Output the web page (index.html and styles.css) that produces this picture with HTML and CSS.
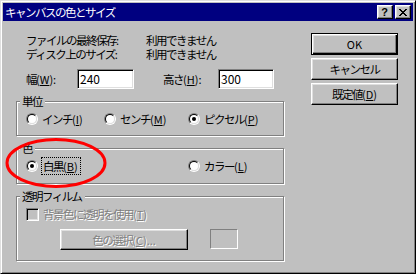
FILE: index.html
```html
<!DOCTYPE html>
<html lang="ja">
<head>
<meta charset="utf-8">
<title>キャンバスの色とサイズ</title>
<link rel="stylesheet" href="styles.css">
</head>
<body>
<div class="window">
  <div class="titlebar">
    <span class="title">キャンバスの色とサイズ</span>
    <div class="caption-buttons">
      <span class="cap-btn help">?</span>
      <span class="cap-btn close">
        <svg width="8" height="7" viewBox="0 0 8 7" shape-rendering="crispEdges"><path d="M0 0h2v1H0zM6 0h2v1H6zM1 1h2v1H1zM5 1h2v1H5zM2 2h4v1H2zM3 3h2v1H3zM2 4h4v1H2zM1 5h2v1H1zM5 5h2v1H5zM0 6h2v1H0zM6 6h2v1H6z" fill="#000"/></svg>
      </span>
    </div>
  </div>
  <div class="content">
    <div class="main">
      <div class="info">
        <span>ファイルの最終保存<span class="lat">:</span></span><span>利用できません</span>
        <span>ディスク上のサイズ<span class="lat">:</span></span><span>利用できません</span>
      </div>
      <div class="size-row">
        <span class="size-label w">幅<span class="lat">(<u>W</u>):</span></span>
        <span class="edit w">240</span>
        <span class="size-label h">高さ<span class="lat">(<u>H</u>):</span></span>
        <span class="edit h">300</span>
      </div>
      <div class="group units">
        <span class="legend">単位</span>
        <div class="options three">
          <span class="opt"><span class="radio"></span><span>インチ<span class="lat">(<u>I</u>)</span></span></span>
          <span class="opt"><span class="radio"></span><span>センチ<span class="lat">(<u>M</u>)</span></span></span>
          <span class="opt"><span class="radio checked"></span><span>ピクセル<span class="lat">(<u>P</u>)</span></span></span>
        </div>
      </div>
      <div class="group colors">
        <span class="legend">色</span>
        <div class="options two">
          <span class="opt"><span class="radio checked"></span><span class="focus">白黒<span class="lat">(<u>B</u>)</span></span></span>
          <span class="opt"><span class="radio"></span><span>カラー<span class="lat">(<u>L</u>)</span></span></span>
        </div>
      </div>
      <div class="group trans">
        <span class="legend">透明フィルム</span>
        <div class="check-row">
          <span class="checkbox"></span>
          <span class="disabled">背景色に透明を使用<span class="lat">(<u>T</u>)</span></span>
        </div>
        <div class="pick-row">
          <span class="btn pick"><span class="disabled">色の選択<span class="lat">(<u>C</u>)...</span></span></span>
          <span class="swatch"></span>
        </div>
      </div>
    </div>
    <div class="buttons">
      <span class="btn default"><span class="lat">OK</span></span>
      <span class="btn">キャンセル</span>
      <span class="btn">既定値<span class="lat">(<u>D</u>)</span></span>
    </div>
  </div>
</div>
<svg class="annotation" width="416" height="274" viewBox="0 0 416 274">
  <ellipse cx="56" cy="163" rx="49" ry="23.5" fill="none" stroke="#ff0000" stroke-width="3"/>
</svg>
</body>
</html>
```
FILE: styles.css
```css
* { box-sizing: border-box; }

html, body {
  margin: 0;
  padding: 0;
}

body {
  position: relative;
  width: 416px;
  height: 274px;
  background: #c0c0c0;
  font-family: "Noto Sans CJK JP", sans-serif;
  font-size: 11.5px;
  line-height: 14px;
  letter-spacing: -1.5px;
  color: #000;
  overflow: hidden;
}

.lat {
  letter-spacing: 0;
  font-size: 11px;
}

u { text-decoration: underline; text-underline-offset: 1px; }

.window {
  width: 416px;
  height: 274px;
  background: #c0c0c0;
  border: 1px solid;
  border-color: #dfdfdf #000 #000 #dfdfdf;
  box-shadow: inset 1px 1px #fff, inset -1px -1px #808080;
  padding: 2px;
  display: flex;
  flex-direction: column;
}

.titlebar {
  height: 18px;
  flex: none;
  background: #000080;
  color: #fff;
  display: flex;
  align-items: center;
  justify-content: space-between;
  padding: 0 2px;
}

.title { line-height: 18px; font-size: 11.5px; }

.caption-buttons {
  display: flex;
  gap: 2px;
}

.cap-btn {
  width: 16px;
  height: 14px;
  background: #c0c0c0;
  border: 1px solid;
  border-color: #fff #000 #000 #fff;
  box-shadow: inset -1px -1px #808080, inset 1px 1px #dfdfdf;
  display: flex;
  align-items: center;
  justify-content: center;
  color: #000;
}

.cap-btn.help {
  font-family: "Liberation Sans", sans-serif;
  font-weight: bold;
  font-size: 11px;
  letter-spacing: 0;
  line-height: 12px;
  padding-right: 1px;
}

.cap-btn.close svg { display: block; }

.content {
  flex: 1;
  display: flex;
  padding: 12px 0 0 13px;
}

.main {
  width: 268px;
  flex: none;
}

.info {
  display: grid;
  grid-template-columns: 120px auto;
  padding-left: 10px;
}

.size-row {
  display: flex;
  align-items: center;
  height: 20px;
  margin-top: 8px;
  padding-left: 10px;
}

.size-label.w { width: 51px; }
.size-label.h { width: 55px; margin-left: 29px; }

.edit {
  height: 20px;
  background: #fff;
  border: 1px solid;
  border-color: #808080 #fff #fff #808080;
  box-shadow: inset 1px 1px #000, inset -1px -1px #dfdfdf;
  font-size: 12px;
  letter-spacing: 0;
  line-height: 18px;
  padding-left: 2px;
}
.edit.w { width: 57px; }
.edit.h { width: 56px; }

.group {
  position: relative;
  border: 1px solid #808080;
  box-shadow: inset 1px 1px #fff, 1px 1px #fff;
  margin-top: 12px;
}
.group.units { height: 35px; }
.group.colors { height: 36px; }
.group.trans { height: 65px; }

.legend {
  position: absolute;
  top: -8px;
  left: 3px;
  padding: 0 3px 0 2px;
  background: #c0c0c0;
  line-height: 14px;
}

.options {
  display: grid;
  padding-left: 9px;
}
.options.three { grid-template-columns: 78px 84px auto; padding-top: 9px; }
.options.two { grid-template-columns: 162px auto; padding-top: 9px; }

.opt {
  display: flex;
  align-items: center;
  gap: 4px;
  height: 16px;
}

.radio {
  position: relative;
  width: 12px;
  height: 12px;
  flex: none;
  border-radius: 50%;
  border: 1px solid;
  border-color: #808080 #fff #fff #808080;
}
.radio::before {
  content: "";
  position: absolute;
  left: 0;
  top: 0;
  width: 10px;
  height: 10px;
  box-sizing: border-box;
  border-radius: 50%;
  border: 1px solid;
  border-color: #000 #dfdfdf #dfdfdf #000;
  background: #fff;
}
.radio.checked::after {
  content: "";
  position: absolute;
  left: 3px;
  top: 3px;
  width: 4px;
  height: 4px;
  border-radius: 50%;
  background: #000;
}

.focus {
  outline: 1px dotted #000;
  outline-offset: 0;
  padding: 1px 2px 1px 1px;
  line-height: 14px;
}

.check-row {
  display: flex;
  align-items: center;
  gap: 4px;
  height: 14px;
  margin: 10px 0 0 9px;
}

.checkbox {
  width: 13px;
  height: 13px;
  flex: none;
  border: 1px solid;
  border-color: #808080 #fff #fff #808080;
  box-shadow: inset 1px 1px #000, inset -1px -1px #dfdfdf;
  background: #c0c0c0;
}

.disabled {
  color: #808080;
  text-shadow: 1px 1px 0 #fff;
}

.pick-row {
  display: flex;
  align-items: flex-start;
  margin: 8px 0 0 43px;
}

.btn {
  width: 87px;
  height: 22px;
  background: #c0c0c0;
  border: 1px solid;
  border-color: #fff #000 #000 #fff;
  box-shadow: inset -1px -1px #808080, inset 1px 1px #dfdfdf;
  display: flex;
  align-items: center;
  justify-content: center;
}

.btn.pick {
  width: 128px;
  height: 21px;
}

.swatch {
  width: 28px;
  height: 20px;
  margin-left: 22px;
  border: 1px solid;
  border-color: #808080 #fff #fff #808080;
}

.buttons {
  display: flex;
  flex-direction: column;
  gap: 3px;
  margin-left: 27px;
}

.btn.default {
  border-color: #000;
  box-shadow: inset 1px 1px #fff, inset -1px -1px #000, inset -2px -2px #808080, inset 2px 2px #dfdfdf;
}

.annotation {
  position: absolute;
  left: 0;
  top: 0;
  pointer-events: none;
}
```
